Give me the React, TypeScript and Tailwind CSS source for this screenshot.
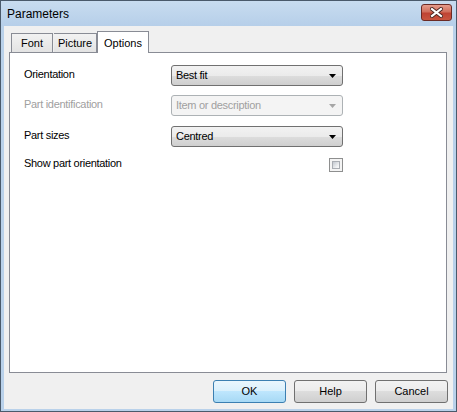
import React from "react";

const font = { fontFamily: '"Liberation Sans", Arial, sans-serif' };

function ComboBox({ value, disabled }: { value: string; disabled?: boolean }) {
  return (
    <div
      className={`flex h-[21px] w-[172px] items-center justify-between rounded-[3px] border pl-[4px] pr-[6px] ${
        disabled
          ? "border-[#adb2b5] bg-[#f4f4f4] text-[#a0a0a0]"
          : "border-[#707070] bg-[linear-gradient(#f2f2f2,#ebebeb_50%,#dddddd_50%,#cfcfcf)] text-black"
      }`}
    >
      <span className="text-[11px] tracking-[-0.3px]">{value}</span>
      <svg width="7" height="4" viewBox="0 0 7 4">
        <path d="M0 0H7L3.5 4Z" fill={disabled ? "#a6a6a6" : "#000"} />
      </svg>
    </div>
  );
}

function Row({ label, disabled, children }: { label: string; disabled?: boolean; children: React.ReactNode }) {
  return (
    <div className="flex items-center">
      <div className={`mb-[3px] w-[147px] text-[11px] tracking-[-0.3px] ${disabled ? "text-[#a0a0a0]" : "text-black"}`}>
        {label}
      </div>
      {children}
    </div>
  );
}

function Button({ label, primary }: { label: string; primary?: boolean }) {
  return (
    <div
      className={`flex h-[23px] w-[73px] items-center justify-center rounded-[3px] border text-[11px] text-black ${
        primary
          ? "border-[#3c7fb1] bg-[linear-gradient(#eaf6fd,#d9f0fc_50%,#bee6fd_50%,#a7d9f5)]"
          : "border-[#707070] bg-[linear-gradient(#f2f2f2,#ebebeb_50%,#dddddd_50%,#cfcfcf)]"
      }`}
    >
      {label}
    </div>
  );
}

export default function App() {
  return (
    <div style={font} className="flex h-[412px] w-[457px] flex-col border border-[#4a5a6b] bg-[#b9d1ea]">
      {/* title bar */}
      <div className="flex h-[25px] items-center justify-between bg-gradient-to-b from-[#c8dcf0] to-[#b6cfe9] pl-[6px] pr-[4px]">
        <span className="pt-[1px] text-[12px] text-black">Parameters</span>
        <div className="mb-[3px] flex h-[17px] w-[31px] items-center justify-center rounded-[3px] border border-[#6b2a24] bg-[linear-gradient(#e59c8c,#d06f5c_45%,#bf4333_55%,#c9553f)]">
          <svg width="13" height="11" viewBox="0 0 13 11">
            <path d="M2 2L11 9M11 2L2 9" stroke="#4a2520" strokeWidth="4" strokeLinecap="square" />
            <path d="M2 2L11 9M11 2L2 9" stroke="#fff" strokeWidth="2.2" strokeLinecap="square" />
          </svg>
        </div>
      </div>

      {/* client area */}
      <div className="mx-[3px] flex h-[383px] flex-col bg-[#f0f0f0] pt-[5px]">
        <div className="flex h-[21px] items-end pl-[7px] text-[11px] text-black">
          <div className="flex h-[19px] w-[42px] items-center justify-center border border-b-0 border-[#898c95] bg-[linear-gradient(#f2f2f2,#e3e3e3)]">
            Font
          </div>
          <div className="ml-[1px] flex h-[19px] w-[43px] items-center justify-center border border-b-0 border-l-0 border-[#898c95] bg-[linear-gradient(#f2f2f2,#e3e3e3)]">
            Picture
          </div>
          <div className="relative z-10 mb-[-1px] flex h-[22px] w-[52px] items-start justify-center border border-b-0 border-[#898c95] bg-white pt-[3px]">
            Options
          </div>
        </div>

        <div className="ml-[5px] h-[321px] w-[438px] border border-[#898c95] bg-white pl-[14px] pt-[12px]">
          <Row label="Orientation">
            <ComboBox value="Best fit" />
          </Row>
          <div className="mt-[9px]">
            <Row label="Part identification" disabled>
              <ComboBox value="Item or description" disabled />
            </Row>
          </div>
          <div className="mt-[10px]">
            <Row label="Part sizes">
              <ComboBox value="Centred" />
            </Row>
          </div>
          <div className="mt-[8px]">
            <Row label="Show part orientation">
              <div className="flex w-[172px] justify-end">
                <div className="h-[14px] w-[14px] border border-[#8e8f8f] bg-[#f4f4f4] p-[2px]">
                  <div className="h-full w-full border border-[#a9adb3] bg-[linear-gradient(135deg,#c3c8cf,#eef0f2_70%,#fafafa)]" />
                </div>
              </div>
            </Row>
          </div>
        </div>

        <div className="mt-[7px] flex justify-end gap-[8px] pr-[5px]">
          <Button label="OK" primary />
          <Button label="Help" />
          <Button label="Cancel" />
        </div>
      </div>
    </div>
  );
}
